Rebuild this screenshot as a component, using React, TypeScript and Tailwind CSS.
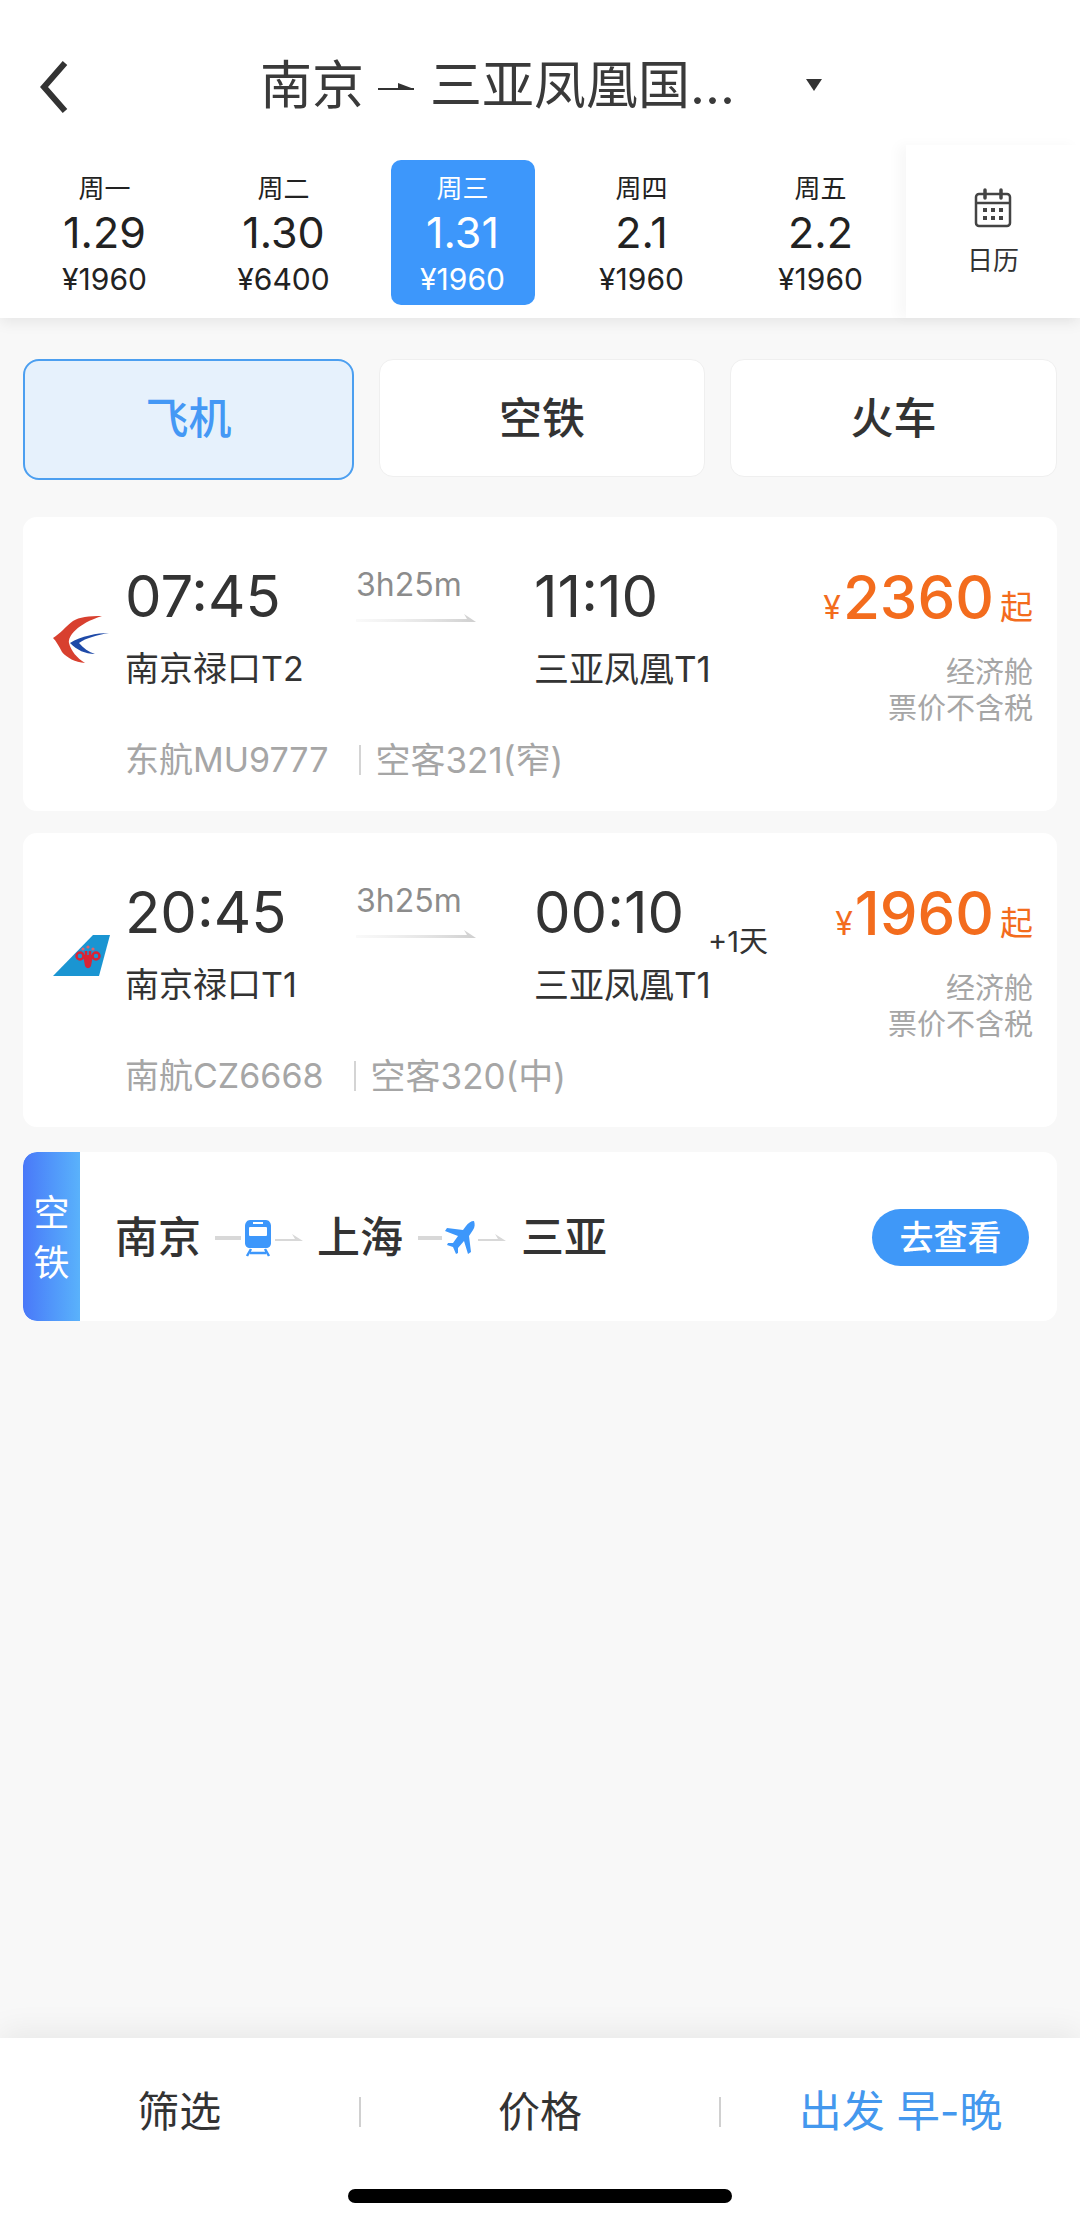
const FONT = "font-['Inter','Noto_Sans_CJK_SC',sans-serif]";

const days = [
  { d: "周一", n: "1.29", p: "¥1960" },
  { d: "周二", n: "1.30", p: "¥6400" },
  { d: "周三", n: "1.31", p: "¥1960", on: true },
  { d: "周四", n: "2.1", p: "¥1960" },
  { d: "周五", n: "2.2", p: "¥1960" },
];

function EasternLogo() {
  return (
    <svg width="58" height="48" viewBox="0 0 58 48" className="block">
      <path d="M49 0 C36 0 26 1 20 5 C13 10 7 18 0 22 C3 25 6 30 9 36 C14 42 22 46 32 47 C24 42 18 35 16 27 C15 20 24 8 49 0 Z" fill="#d8402f" />
      <path d="M56 17 C44 17 28 20 17 27 C24 34 32 38 42 38 C36 36 30 32 26 27 C33 22 44 19 56 17 Z" fill="#1f4aa8" />
    </svg>
  );
}

function SouthernLogo() {
  return (
    <svg width="58" height="42" viewBox="0 0 58 42" className="block">
      <path d="M40 0 H57 L46 41 H0 Z" fill="#1a95d2" />
      <path d="M30 20 H40 L38 31 C36 34 34 34 32 31 Z" fill="#d92436" />
      <circle cx="27" cy="21" r="3.5" fill="none" stroke="#d92436" strokeWidth="2.5" />
      <circle cx="43" cy="21" r="3.5" fill="none" stroke="#d92436" strokeWidth="2.5" />
      <path d="M33 16 V26 M37 16 V26" stroke="#d92436" strokeWidth="2.5" />
      <circle cx="30" cy="14" r="1.6" fill="#e0606c" />
      <circle cx="35" cy="12" r="1.6" fill="#e0606c" />
      <circle cx="40" cy="14" r="1.6" fill="#e0606c" />
    </svg>
  );
}

function GreyArrow({ w = 120 }: { w?: number }) {
  return (
    <svg width={w} height="10" viewBox={`0 0 ${w} 10`} className="block">
      <defs>
        <linearGradient id="ga" x1="0" x2="1" y1="0" y2="0">
          <stop offset="0" stopColor="#e4e4e4" stopOpacity="0.2" />
          <stop offset="1" stopColor="#cfcfcf" />
        </linearGradient>
      </defs>
      <path d={`M0 6 H${w - 9} L${w - 12} 1 L${w} 9 H0 Z`} fill="url(#ga)" />
    </svg>
  );
}

function Flight(props: {
  logo: React.ReactNode;
  logoTop: string;
  dep: string;
  arr: string;
  from: string;
  to: string;
  price: string;
  flight: string;
  plane: string;
  extra?: boolean;
}) {
  return (
    <div className="bg-white rounded-[14px] h-[294px] flex">
      <div className={`w-[102px] pl-[30px] shrink-0 ${props.logoTop}`}>{props.logo}</div>
      <div className="flex-1 pr-[24px] pt-[44px] flex flex-col">
        <div className="flex h-[173px]">
          <div className="w-[231px] shrink-0">
            <div className="text-[58px] leading-[70px] text-[#333333]">{props.dep}</div>
            <div className="text-[34px] leading-[44px] mt-[16px] text-[#333333] whitespace-nowrap">{props.from}</div>
          </div>
          <div className="w-[178px] shrink-0 pt-[4px]">
            <div className="text-[32px] leading-[40px] text-[#8c8c8c]">3h25m</div>
            <div className="mt-[8px]"><GreyArrow /></div>
          </div>
          <div className="relative w-[200px] shrink-0">
            <div className="text-[58px] leading-[70px] text-[#333333]">{props.arr}</div>
            <div className="text-[35px] leading-[44px] mt-[16px] text-[#333333] whitespace-nowrap">{props.to}</div>
            {props.extra && (
              <div className="absolute left-[174px] top-[47px] text-[29px] leading-[36px] text-[#333333] whitespace-nowrap">+1天</div>
            )}
          </div>
          <div className="flex-1 flex flex-col items-end text-[#a6a6a6] text-[29px] leading-[36px]">
            <div className="flex items-baseline text-[#f36c1d] whitespace-nowrap h-[70px] pt-[1px]">
              <span className="text-[32px] mr-[2px]">¥</span>
              <span className="text-[60px] leading-[70px] font-medium">{props.price}</span>
              <span className="text-[33px] ml-[6px]">起</span>
            </div>
            <div className="mt-[24px]">经济舱</div>
            <div>票价不含税</div>
          </div>
        </div>
        <div className="flex items-center text-[34px] leading-[44px] text-[#a6a6a6] mt-[4px]">
          <span>{props.flight}</span>
          <span className="w-[2px] h-[30px] bg-[#d4d4d4] ml-[30px] mr-[15px]" />
          <span className="text-[35px]">{props.plane}</span>
        </div>
      </div>
    </div>
  );
}

export default function App() {
  return (
    <div className={`w-[1080px] h-[2226px] bg-[#f8f8f8] flex flex-col overflow-hidden ${FONT}`}>
      <div className="bg-white h-[318px] shrink-0 shadow-[0_4px_14px_rgba(0,0,0,0.08)] flex flex-col relative z-10">
        <div className="h-[145px] flex items-start pt-[56px] pl-[36px] shrink-0">
          <svg width="36" height="56" viewBox="0 0 36 56" className="block mt-[3px]">
            <path d="M29 4 L8 28 L29 52" fill="none" stroke="#333333" strokeWidth="6" />
          </svg>
          <div className="ml-[188px] flex items-center h-[60px] text-[52px] leading-[60px] text-[#3a3a3a] whitespace-nowrap">
            <span>南京</span>
            <svg width="38" height="16" viewBox="0 0 38 16" className="block mx-[14px] mt-[2px]">
              <path d="M0 9 H36 V11 H0 Z M20 4 L36 10 H20 Z" fill="#333333" />
            </svg>
            <span>三亚凤凰国...</span>
          </div>
          <svg width="18" height="14" viewBox="0 0 18 14" className="block ml-[70px] mt-[22px]">
            <path d="M1 1 H17 L9 13 Z" fill="#333333" />
          </svg>
        </div>
        <div className="flex flex-1 pl-[15px]">
          <div className="flex w-[891px] shrink-0 pt-[15px]">
            {days.map((x) => (
              <div key={x.d} className="w-[179px] shrink-0 flex justify-center">
                <div
                  className={`w-[144px] h-[145px] rounded-[10px] flex flex-col items-center whitespace-nowrap ${
                    x.on ? "bg-[#3d97fb] text-white" : "text-[#222222]"
                  }`}
                >
                  <div className="text-[26px] leading-[30px] mt-[14px]">{x.d}</div>
                  <div className="text-[43px] leading-[50px] mt-[3px]">{x.n}</div>
                  <div className="text-[30px] leading-[34px] mt-[5px]">{x.p}</div>
                </div>
              </div>
            ))}
          </div>
          <div className="flex-1 bg-white flex flex-col items-center shadow-[-8px_0_12px_rgba(0,0,0,0.03)] pt-[43px]">
            <svg width="38" height="40" viewBox="0 0 38 40" className="block">
              <rect x="2" y="6" width="34" height="32" rx="3" fill="none" stroke="#444444" strokeWidth="2.5" />
              <path d="M2 15 H36" stroke="#444444" strokeWidth="2.5" />
              <path d="M11 2 V10 M27 2 V10" stroke="#444444" strokeWidth="3.5" strokeLinecap="round" />
              <g fill="#444444">
                <rect x="9" y="20" width="4" height="4" />
                <rect x="17" y="20" width="4" height="4" />
                <rect x="25" y="20" width="4" height="4" />
                <rect x="9" y="28" width="4" height="4" />
                <rect x="17" y="28" width="4" height="4" />
                <rect x="25" y="28" width="4" height="4" />
              </g>
            </svg>
            <div className="text-[26px] leading-[32px] mt-[17px] text-[#333333]">日历</div>
          </div>
        </div>
      </div>

      <div className="flex-1 px-[23px] pt-[41px] flex flex-col">
        <div className="flex justify-between h-[121px] shrink-0">
          <div className="w-[331px] rounded-[16px] bg-[#e6f1fc] border-2 border-[#4c9ff0] flex items-center justify-center text-[43px] font-medium text-[#4498f5] pb-[2px]">飞机</div>
          <div className="w-[326px] h-[118px] rounded-[14px] bg-white border border-[#efefef] flex items-center justify-center text-[43px] font-medium text-[#333333]">空铁</div>
          <div className="w-[327px] h-[118px] rounded-[14px] bg-white border border-[#efefef] flex items-center justify-center text-[43px] font-medium text-[#333333]">火车</div>
        </div>

        <div className="mt-[37px] flex flex-col gap-[22px]">
          <Flight
            logo={<EasternLogo />}
            logoTop="pt-[99px]"
            dep="07:45"
            arr="11:10"
            from="南京禄口T2"
            to="三亚凤凰T1"
            price="2360"
            flight="东航MU9777"
            plane="空客321(窄)"
          />
          <Flight
            logo={<SouthernLogo />}
            logoTop="pt-[102px]"
            dep="20:45"
            arr="00:10"
            from="南京禄口T1"
            to="三亚凤凰T1"
            price="1960"
            flight="南航CZ6668"
            plane="空客320(中)"
            extra
          />
        </div>

        <div className="mt-[25px] h-[169px] bg-white rounded-[14px] flex items-center overflow-hidden shrink-0">
          <div className="w-[57px] h-full bg-gradient-to-r from-[#4a78f8] to-[#5ab2fb] rounded-l-[14px] flex flex-col items-center justify-center text-white text-[36px] leading-[50px] pt-[2px]">
            <span>空</span>
            <span>铁</span>
          </div>
          <div className="flex items-center ml-[35px] text-[43px] font-medium text-[#333333] pt-[2px]">
            <span>南京</span>
            <div className="flex items-center w-[116px] justify-center">
              <span className="w-[26px] h-[4px] bg-[#d8d8d8]" />
              <svg width="28" height="38" viewBox="0 0 28 38" className="block mx-[3px]">
                <path d="M6 1 H22 C25 1 27 4 27 7 V24 C27 27 25 29 22 29 H6 C3 29 1 27 1 24 V7 C1 4 3 1 6 1 Z" fill="#3d97fb" />
                <rect x="5" y="8" width="18" height="9" rx="1" fill="#ffffff" />
                <rect x="9" y="3" width="10" height="2" fill="#ffffff" />
                <path d="M7 30 L3 37 M21 30 L25 37 M6 34 H22" stroke="#3d97fb" strokeWidth="2.5" fill="none" />
              </svg>
              <svg width="28" height="10" viewBox="0 0 28 10" className="block">
                <path d="M0 6 H20 L17 1 L28 8 H0 Z" fill="#d8d8d8" />
              </svg>
            </div>
            <span>上海</span>
            <div className="flex items-center w-[118px] justify-center">
              <span className="w-[24px] h-[4px] bg-[#d8d8d8]" />
              <svg width="30" height="34" viewBox="0 0 30 34" className="block mx-[3px]">
                <path d="M29 0 C26 0 23 2 21 5 L18 9 L2 7 L0 10 L13 15 L8 22 L3 22 L2 24 L8 26 L11 33 L13 32 L13 27 L19 20 L23 33 L26 31 L24 15 L28 9 C30 6 30 3 29 0 Z" fill="#3d97fb" />
              </svg>
              <svg width="28" height="10" viewBox="0 0 28 10" className="block">
                <path d="M0 6 H20 L17 1 L28 8 H0 Z" fill="#d8d8d8" />
              </svg>
            </div>
            <span>三亚</span>
          </div>
          <div className="ml-auto mr-[28px] w-[157px] h-[57px] rounded-full bg-[#3f98f8] text-white text-[34px] font-medium flex items-center justify-center mt-[2px]">去查看</div>
        </div>
      </div>

      <div className="h-[188px] bg-white shrink-0 shadow-[0_-6px_30px_rgba(0,0,0,0.07)] relative z-10 flex flex-col items-center">
        <div className="w-full flex items-center h-[147px] text-[42px] text-[#333333]">
          <div className="flex-1 text-center">筛选</div>
          <div className="w-[2px] h-[30px] bg-[#d0d0d0]" />
          <div className="flex-1 text-center">价格</div>
          <div className="w-[2px] h-[30px] bg-[#d0d0d0]" />
          <div className="flex-1 text-center text-[#4498ee] text-[43px]">出发 早-晚</div>
        </div>
        <div className="w-[384px] h-[14px] rounded-full bg-black mt-[4px]" />
      </div>
    </div>
  );
}
